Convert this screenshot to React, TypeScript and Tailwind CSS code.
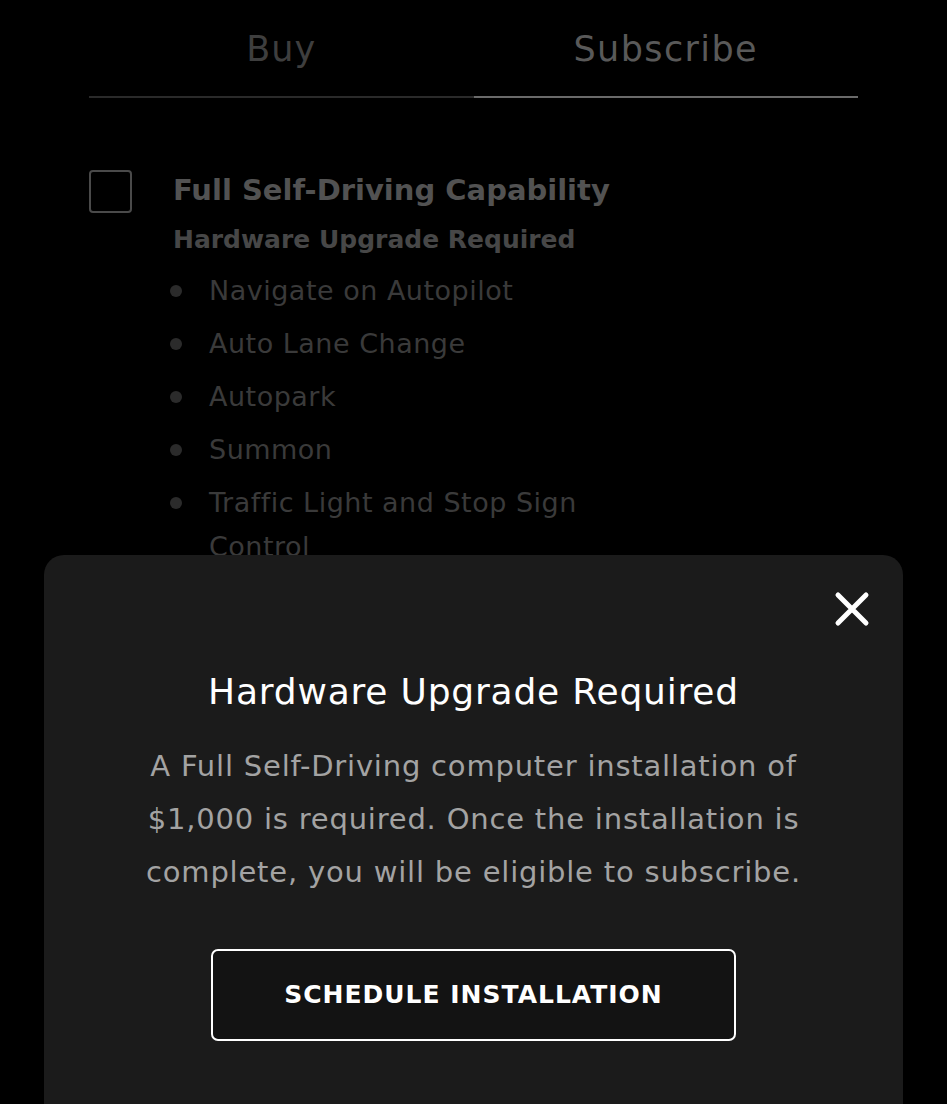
import React from 'react';

const features = ['Navigate on Autopilot', 'Auto Lane Change', 'Autopark', 'Summon', 'Traffic Light and Stop Sign Control'];

export default function App() {
  return (
    <div className="relative h-[1104px] w-full overflow-hidden bg-black" style={{ fontFamily: '"DejaVu Sans", "Noto Sans", sans-serif' }}>
      <div className="mx-[89px]">
        {/* tabs */}
        <div className="flex">
          <div className="flex-1 border-b-2 border-[#2a2a2a] pt-[26px] pb-[24px] text-center text-[35px] leading-[46px] tracking-[1px] text-[#3e3e3e]">Buy</div>
          <div className="flex-1 border-b-2 border-[#6a6a6a] pt-[26px] pb-[24px] text-center text-[35px] leading-[46px] tracking-[1.4px] text-[#595959]">Subscribe</div>
        </div>

        {/* option */}
        <div className="mt-[72px] flex">
          <div className="h-[43px] w-[43px] shrink-0 rounded-[4px] border-2 border-[#4a4a4a]" />
          <div className="ml-[41px] flex-1">
            <div className="-mt-[2px] text-[29px] font-semibold leading-[44px] text-[#525252]">Full Self-Driving Capability</div>
            <div className="mt-[10px] text-[25px] font-semibold leading-[36px] text-[#474747]">Hardware Upgrade Required</div>
            <ul className="mt-[11px] flex flex-col gap-[9px]">
              {features.map((f) => (
                <li key={f} className="flex items-start">
                  <span className="-ml-[3px] mt-[16px] h-[12px] w-[12px] shrink-0 rounded-full bg-[#2b2b2b]" />
                  <span className="ml-[27px] max-w-[420px] text-[27px] leading-[44px] tracking-[0.5px] text-[#3a3a3a]">{f}</span>
                </li>
              ))}
            </ul>
          </div>
        </div>
      </div>

      {/* modal sheet */}
      <div className="absolute left-[44px] right-[44px] top-[555px] h-[600px] rounded-[20px] bg-[#1b1b1b]">
        <div className="flex justify-end pr-[33px] pt-[36px]">
          <svg width="36" height="36" viewBox="0 0 36 36" fill="none" stroke="white" strokeWidth="5" strokeLinecap="round">
            <path d="M4 4 L32 32 M32 4 L4 32" />
          </svg>
        </div>
        <div className="mt-[42px] text-center text-[36px] leading-[46px] tracking-[0.8px] text-white">Hardware Upgrade Required</div>
        <p className="mx-auto mt-[25px] w-[700px] text-center text-[29px] leading-[53px] tracking-[0.8px] text-[#a3a3a3]">
          A Full Self-Driving computer installation of $1,000 is required. Once the installation is complete, you will be eligible to subscribe.
        </p>
        <div className="mt-[50px] flex justify-center">
          <button className="flex h-[92px] w-[525px] items-center justify-center rounded-[7px] border-2 border-white bg-[#131313] text-[25px] font-bold tracking-[1px] text-white">
            SCHEDULE INSTALLATION
          </button>
        </div>
      </div>
    </div>
  );
}
